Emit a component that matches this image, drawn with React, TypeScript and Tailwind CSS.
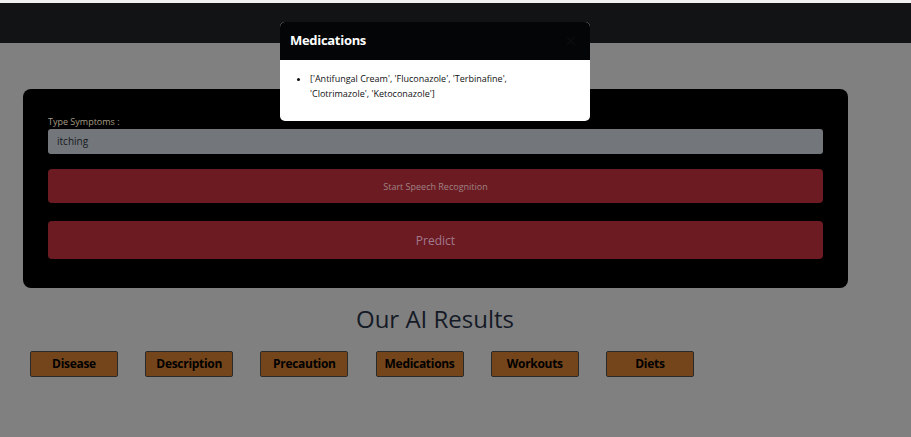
const tabs = ["Disease", "Description", "Precaution", "Medications", "Workouts", "Diets"];

const App = () => {
    return (
        <div className="relative w-[911px] h-[437px] overflow-hidden bg-[#808080] font-['Open_Sans',sans-serif]">
            {/* top strip + navbar */}
            <div className="h-[3px] bg-[#f0f0f0]"></div>
            <nav className="h-[40px] bg-[#121315]"></nav>

            {/* form card */}
            <div className="mt-[46px] ml-[23px] w-[825px] h-[199px] bg-black rounded-[8px] px-[25px] pt-[27px]">
                <label className="block text-[9px] leading-[12px] text-[#a59c83]">Type Symptoms :</label>
                <div className="mt-[1px] h-[25px] bg-[#73777c] rounded-[3px] flex items-center px-[9px] text-[10px] text-[#16181b]">itching</div>
                <button className="mt-[15px] w-full h-[34px] bg-[#6d1b22] rounded-[4px] text-[9px] text-[#9e8385] pt-[1px]">Start Speech Recognition</button>
                <button className="mt-[18px] w-full h-[38px] bg-[#6d1b22] rounded-[4px] text-[12px] text-[#a17a8e] pt-[1px]">Predict</button>
            </div>

            <h1 className="mt-[15px] text-center text-[24px] leading-[32px] font-medium text-[#141a26] w-[870px]">Our AI Results</h1>

            <div className="mt-[16px] ml-[30px] flex gap-[27.2px]">
                {tabs.map((t) => (
                    <button key={t} className="w-[88px] h-[26px] bg-[#74451a] border border-[#2a2a2a] rounded-[2px] text-[12px] font-bold text-black tracking-[-0.3px]">{t}</button>
                ))}
            </div>

            {/* modal */}
            <div className="absolute left-[280px] top-[22px] w-[310px] rounded-[5px] overflow-hidden bg-white">
                <div className="h-[38px] bg-[#030506] flex items-center justify-between px-[10px]">
                    <span className="text-[13px] font-bold text-white tracking-[-0.3px]">Medications</span>
                    <svg width="10" height="10" viewBox="0 0 10 10" className="mr-[4px]">
                        <path d="M1 1L9 9M9 1L1 9" stroke="#0c0d0e" strokeWidth="1.3" />
                    </svg>
                </div>
                <ul className="pl-[30px] pr-[66px] pt-[11px] pb-[20px] list-disc text-[9px] leading-[15px] text-[#111]">
                    <li>['Antifungal Cream', 'Fluconazole', 'Terbinafine', 'Clotrimazole', 'Ketoconazole']</li>
                </ul>
            </div>
        </div>
    );
};

export default App;
